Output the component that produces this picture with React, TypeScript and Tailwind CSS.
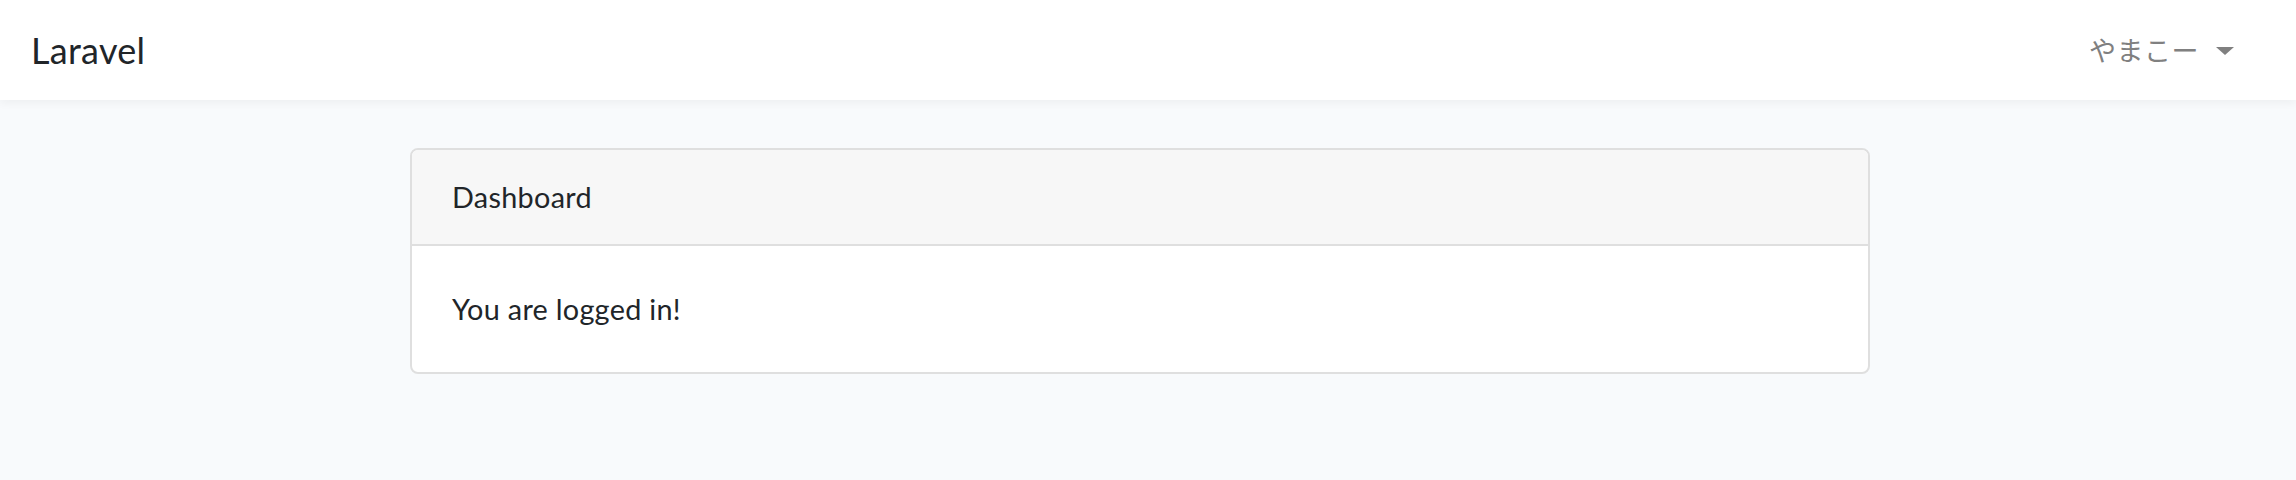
import { useState } from "react";

function Navbar() {
  const [open, setOpen] = useState(false);

  return (
    <nav className="relative z-10 flex h-[100px] items-center justify-between bg-white pl-[31px] pr-[62px] shadow-[0_4px_8px_rgba(0,0,0,0.04)]">
      <a href="#" className="text-[36px] leading-[57px] tracking-[0.3px] text-[#212529]">
        Laravel
      </a>
      <button
        type="button"
        onClick={() => setOpen(!open)}
        className="flex items-center text-[27px] leading-[46px] tracking-[0.5px] text-[#808080]"
        style={{ fontFamily: '"Noto Sans CJK JP", "Lato", sans-serif' }}
      >
        やまこー
        <span className="ml-[17px] mt-[1px] h-0 w-0 border-x-[9px] border-t-[8px] border-x-transparent border-t-[#808080]" />
      </button>
    </nav>
  );
}

function Card() {
  return (
    <div className="ml-[410px] w-[1460px] overflow-hidden rounded-[8px] border-2 border-[#dfdfdf] bg-white text-[28.8px] leading-[46px] tracking-[0.3px] text-[#212529]">
      <div className="border-b-2 border-[#dfdfdf] bg-[#f7f7f7] px-[40px] py-[24px]">Dashboard</div>
      <div className="px-[40px] py-[40px]">You are logged in!</div>
    </div>
  );
}

export default function App() {
  return (
    <div className="h-[480px] w-full bg-[#f8fafc] font-['Lato',sans-serif]">
      <Navbar />
      <main className="py-[48px]">
        <Card />
      </main>
    </div>
  );
}
